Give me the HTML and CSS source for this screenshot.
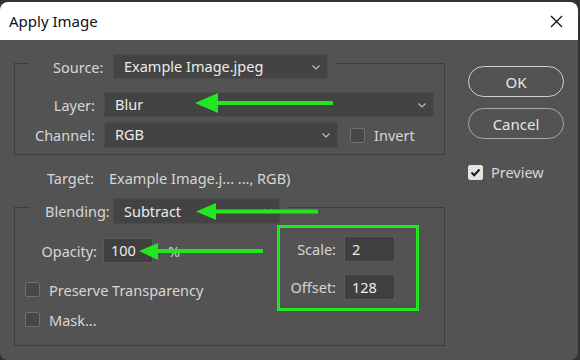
FILE: index.html
```html
<!DOCTYPE html>
<html lang="en">
<head>
  <meta charset="UTF-8">
  <title>Apply Image</title>
  <link rel="stylesheet" href="styles.css">
</head>
<body>
  <div class="dialog">
    <div class="titlebar">
      <span class="title">Apply Image</span>
      <svg class="close" width="13" height="13" viewBox="0 0 13 13"><path d="M1 1L12 12M12 1L1 12" stroke="#111" stroke-width="1.3" fill="none"/></svg>
    </div>

    <div class="content">
      <div class="main">
        <fieldset class="group source-group">
          <legend>
            <div class="legend-row">
              <span class="lbl source-lbl">Source:</span>
              <div class="select source-select">Example Image.jpeg
                <svg class="chev" width="8" height="5" viewBox="0 0 8 5"><path d="M0.5 0.5L4 4L7.5 0.5" stroke="#bdbdbd" stroke-width="1.2" fill="none"/></svg>
              </div>
            </div>
          </legend>
          <div class="rows">
            <div class="row">
              <span class="lbl col">Layer:</span>
              <div class="select layer-select">Blur
                <svg class="chev" width="8" height="5" viewBox="0 0 8 5"><path d="M0.5 0.5L4 4L7.5 0.5" stroke="#bdbdbd" stroke-width="1.2" fill="none"/></svg>
              </div>
            </div>
            <div class="row">
              <span class="lbl col">Channel:</span>
              <div class="select channel-select">RGB
                <svg class="chev" width="8" height="5" viewBox="0 0 8 5"><path d="M0.5 0.5L4 4L7.5 0.5" stroke="#bdbdbd" stroke-width="1.2" fill="none"/></svg>
              </div>
              <span class="check invert-check"></span>
              <span class="lbl check-text">Invert</span>
            </div>
          </div>
        </fieldset>

        <div class="target">
          <span class="lbl col">Target:</span>
          <span class="target-value">Example Image.j... ..., RGB)</span>
        </div>

        <fieldset class="group blend-group">
          <legend>
            <div class="legend-row">
              <span class="lbl blend-lbl">Blending:</span>
              <div class="select blend-select">Subtract
                <svg class="chev" width="8" height="5" viewBox="0 0 8 5"><path d="M0.5 0.5L4 4L7.5 0.5" stroke="#bdbdbd" stroke-width="1.2" fill="none"/></svg>
              </div>
            </div>
          </legend>
          <div class="blend-body">
            <div class="blend-left">
              <div class="row opacity-row">
                <span class="lbl opacity-lbl">Opacity:</span>
                <div class="field opacity-field">100</div>
                <span class="lbl pct">%</span>
              </div>
              <div class="row check-row">
                <span class="check"></span>
                <span class="lbl check-text">Preserve Transparency</span>
              </div>
              <div class="row check-row mask-row">
                <span class="check"></span>
                <span class="lbl check-text">Mask...</span>
              </div>
            </div>
            <div class="scale-box">
              <span class="lbl">Scale:</span>
              <div class="field">2</div>
              <span class="lbl">Offset:</span>
              <div class="field">128</div>
            </div>
          </div>
        </fieldset>
      </div>

      <div class="side">
        <button class="btn primary">OK</button>
        <button class="btn">Cancel</button>
        <div class="preview">
          <span class="check on"><svg width="11" height="9" viewBox="0 0 11 9"><path d="M1.5 4.5L4.2 7.2L9.5 1.5" stroke="#1b1b1b" stroke-width="2" fill="none"/></svg></span>
          <span class="lbl">Preview</span>
        </div>
      </div>
    </div>
  </div>

  <!-- green annotation arrows drawn over the dialog -->
  <svg class="arrows" width="580" height="360" viewBox="0 0 580 360">
    <g fill="#22e622" stroke="none">
      <rect x="214" y="101" width="119" height="4"/>
      <polygon points="195,103 218,93 218,113"/>
      <rect x="212" y="209.5" width="106" height="4"/>
      <polygon points="196,211.5 216,203 216,220"/>
      <rect x="155" y="249" width="108" height="4"/>
      <polygon points="139,251 158,243 158,260"/>
    </g>
  </svg>
</body>
</html>
```

FILE: styles.css
```css
* { box-sizing: border-box; }
body {
  margin: 0;
  background: #333;
  font-family: "Noto Sans", "Open Sans", sans-serif;
  font-size: 14.5px;
  position: relative;
  width: 580px;
  height: 360px;
  overflow: hidden;
}
.dialog {
  margin-top: 2px;
  width: 578px;
  height: 358px;
  background: #535353;
  border-radius: 8px;
  overflow: hidden;
}
.titlebar {
  height: 38px;
  background: #fff;
  display: flex;
  align-items: center;
  justify-content: space-between;
  padding: 0 15px 0 9px;
}
.title {
  font-size: 15px;
  color: #111;
}
.content {
  display: flex;
}
.main {
  width: 431px;
  margin-left: 14px;
  margin-top: 7px;
}
.lbl {
  color: #d6d6d6;
  white-space: nowrap;
}
.group {
  border: 1px solid #3e3e3e;
  margin: 0;
  padding: 0;
  min-width: 0;
}
.legend-row {
  display: flex;
  align-items: center;
}
.source-group legend {
  margin-left: 13px;
  padding: 7px 8px 0 25px;
}
.source-lbl {
  width: 48px;
  margin-right: 12px;
}
.select {
  position: relative;
  height: 25px;
  line-height: 23px;
  background: #434343;
  border: 1px solid #4b4b4b;
  border-radius: 2px;
  color: #ebebeb;
  padding-left: 10px;
}
.chev {
  position: absolute;
  right: 7px;
  top: 10px;
}
.source-select { width: 215px; }
.rows {
  padding: 13px 0 6px 0;
  display: flex;
  flex-direction: column;
  gap: 5px;
}
.row {
  display: flex;
  align-items: center;
}
.col {
  width: 80px;
  text-align: right;
  flex: none;
}
.rows .select {
  margin-left: 9px;
  padding-left: 10px;
}
.layer-select { width: 330px; }
.channel-select { width: 234px; height: 26px; }
.check {
  width: 15px;
  height: 15px;
  border: 1px solid #707070;
  border-radius: 2px;
  background: #474747;
  flex: none;
  display: flex;
  align-items: center;
  justify-content: center;
}
.invert-check { margin-left: 12px; }
.check-text { margin-left: 9px; }
.target {
  display: flex;
  align-items: center;
  height: 20px;
  margin-top: 13px;
  margin-bottom: 2px;
}
.target-value {
  margin-left: 15px;
  color: #d6d6d6;
}
.blend-group legend {
  margin-left: 15px;
  padding: 8px 8px 0 15px;
}
.blend-lbl {
  width: 59px;
  margin-right: 9px;
}
.blend-select {
  width: 167px;
  height: 26px;
  line-height: 24px;
  padding-left: 10px;
}
.blend-body {
  display: flex;
  padding-top: 1px;
}
.blend-left {
  width: 262px;
  flex: none;
  padding: 13px 0 13px 10px;
}
.opacity-row { height: 25px; }
.opacity-lbl {
  width: 72px;
  text-align: right;
  margin-right: 6px;
}
.field {
  height: 26px;
  line-height: 24px;
  background: #3f3f3f;
  border: 1px solid #5a5a5a;
  color: #ededed;
  padding-left: 7px;
}
.opacity-field {
  width: 50px;
  height: 25px;
  line-height: 23px;
}
.pct { margin-left: 15px; }
.check-row {
  height: 25px;
  margin-top: 14px;
}
.mask-row { margin-top: 5px; }
.scale-box {
  width: 142px;
  height: 86px;
  border: 3px solid #22e622;
  padding: 8px 21px 8px 8px;
  display: grid;
  grid-template-columns: 48px 51px;
  column-gap: 8px;
  row-gap: 12px;
  align-items: center;
}
.scale-box .lbl { text-align: right; }
.scale-box .field { padding-left: 7px; }
.side {
  width: 96px;
  margin-left: 23px;
  padding-top: 26px;
  display: flex;
  flex-direction: column;
}
.btn {
  height: 31px;
  border: 1px solid #a9a9a9;
  border-radius: 16px;
  background: #535353;
  color: #e6e6e6;
  font-family: inherit;
  font-size: 15px;
  padding: 0;
}
.btn.primary { border-color: #cfcfcf; }
.btn + .btn { margin-top: 11px; }
.preview {
  display: flex;
  align-items: center;
  height: 20px;
  margin-top: 23px;
  gap: 8px;
}
.check.on {
  background: #e4e4e4;
  border-color: #e4e4e4;
}
.arrows {
  position: absolute;
  left: 0;
  top: 0;
}
```
